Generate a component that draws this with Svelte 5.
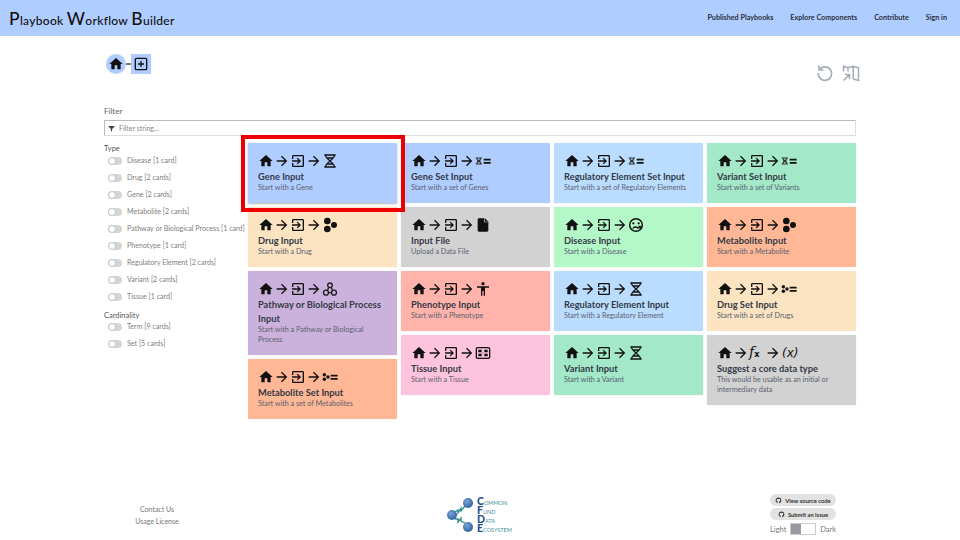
<script>
  const ICONS = {
    home: 'M10 20v-6h4v6h5v-8h3L12 3 2 12h3v8z',
    arrow: 'M4,11V13H16L10.5,18.5L11.92,19.92L19.84,12L11.92,4.08L10.5,5.5L16,11H4Z',
    enter: 'M19,3H5C3.89,3 3,3.89 3,5V9H5V5H19V19H5V15H3V19A2,2 0 0,0 5,21H19A2,2 0 0,0 21,19V5C21,3.89 20.1,3 19,3M10.08,15.58L11.5,17L16.5,12L11.5,7L10.08,8.41L12.67,11H3V13H12.67L10.08,15.58Z',
    file: 'M14 2H6a2 2 0 0 0-2 2v16a2 2 0 0 0 2 2h12a2 2 0 0 0 2-2V8z'
  }

  const columns = [
    [
      { title: 'Gene Input', desc: 'Start with a Gene', icon: 'dna', color: '#b0cdff', selected: true },
      { title: 'Drug Input', desc: 'Start with a Drug', icon: 'pills', color: '#fce4c2' },
      { title: 'Pathway or Biological Process Input', desc: 'Start with a Pathway or Biological Process', icon: 'pathway', color: '#cbb2dc' },
      { title: 'Metabolite Set Input', desc: 'Start with a set of Metabolites', icon: 'pillset', color: '#ffb795' }
    ],
    [
      { title: 'Gene Set Input', desc: 'Start with a set of Genes', icon: 'dnaset', color: '#b0cdff' },
      { title: 'Input File', desc: 'Upload a Data File', icon: 'file', color: '#d2d2d2' },
      { title: 'Phenotype Input', desc: 'Start with a Phenotype', icon: 'person', color: '#ffb3aa' },
      { title: 'Tissue Input', desc: 'Start with a Tissue', icon: 'tissue', color: '#ffc4dd' }
    ],
    [
      { title: 'Regulatory Element Set Input', desc: 'Start with a set of Regulatory Elements', icon: 'dnaset', color: '#badcff' },
      { title: 'Disease Input', desc: 'Start with a Disease', icon: 'face', color: '#b4f8c8' },
      { title: 'Regulatory Element Input', desc: 'Start with a Regulatory Element', icon: 'dna', color: '#badcff' },
      { title: 'Variant Input', desc: 'Start with a Variant', icon: 'dna', color: '#a2e8c9' }
    ],
    [
      { title: 'Variant Set Input', desc: 'Start with a set of Variants', icon: 'dnaset', color: '#a2e8c9' },
      { title: 'Metabolite Input', desc: 'Start with a Metabolite', icon: 'pills', color: '#ffb795' },
      { title: 'Drug Set Input', desc: 'Start with a set of Drugs', icon: 'pillset', color: '#fce4c2' },
      { title: 'Suggest a core data type', desc: 'This would be usable as an initial or intermediary data', icon: 'suggest', color: '#d2d2d2' }
    ]
  ]

  const types = ['Disease [1 card]', 'Drug [2 cards]', 'Gene [2 cards]', 'Metabolite [2 cards]', 'Pathway or Biological Process [1 card]', 'Phenotype [1 card]', 'Regulatory Element [2 cards]', 'Variant [2 cards]', 'Tissue [1 card]']
  const cardinality = ['Term [9 cards]', 'Set [5 cards]']
  const GITHUB = 'M12 2a10 10 0 0 0-3.2 19.5c.5.1.7-.2.7-.5v-1.8c-2.8.6-3.4-1.3-3.4-1.3-.5-1.2-1.1-1.5-1.1-1.5-.9-.6.1-.6.1-.6 1 .1 1.5 1 1.5 1 .9 1.5 2.3 1.1 2.9.8.1-.6.3-1.1.6-1.3-2.2-.3-4.6-1.1-4.6-5 0-1.1.4-2 1-2.7-.1-.3-.4-1.3.1-2.7 0 0 .8-.3 2.8 1a9.600 9.600 0 0 1 5 0c1.900-1.300 2.800-1 2.800-1 .5 1.400.2 2.400.1 2.700.6.700 1 1.600 1 2.700 0 3.900-2.300 4.700-4.600 5 .4.300.7.900.7 1.900V21c0 .3.2.6.7.5A10 10 0 0 0 12 2z'
</script>

{#snippet dna()}
  <svg class="icon" viewBox="0 0 24 24" fill="none" stroke="#111" stroke-width="1.900">
    <path d="M3.500 3h17M3.500 21h17M5 3c0 6.500 14 11.500 14 18M19 3c0 6.500-14 11.500-14 18M7 7.500h10M7 16.500h10" />
  </svg>
{/snippet}

{#snippet setLines()}
  <path d="M13 8.500h10.500v2.600H13zM13 13.500h10.500v2.600H13z" fill="#111" />
{/snippet}

{#snippet finalIcon(name)}
  {#if name === 'dna'}
    {@render dna()}
  {:else if name === 'dnaset'}
    <svg class="icon" viewBox="0 0 24 24">
      <path d="M1 7.500h9.500M1 16.500h9.500M2.500 7.500c0 3.500 6.500 5.500 6.500 9M9 7.500c0 3.500-6.500 5.500-6.500 9M3 12h5.500" fill="none" stroke="#333" stroke-width="1.600" />
      {@render setLines()}
    </svg>
  {:else if name === 'pills'}
    <svg class="icon" viewBox="0 0 24 24" fill="#111">
      <circle cx="8" cy="6" r="5" /><circle cx="8" cy="18" r="5" /><circle cx="18" cy="12" r="4.500" />
    </svg>
  {:else if name === 'pillset'}
    <svg class="icon" viewBox="0 0 24 24" fill="#111">
      <circle cx="3.500" cy="8.500" r="2.600" /><circle cx="3.500" cy="15.500" r="2.600" /><circle cx="9" cy="12" r="2.600" />
      {@render setLines()}
    </svg>
  {:else if name === 'file'}
    <svg class="icon" viewBox="0 0 24 24"><path d={ICONS.file} fill="#111" /><path d="M14 2v6h6z" fill="#d2d2d2" /><path d="M15 2l5 5h-5z" fill="#111" /></svg>
  {:else if name === 'person'}
    <svg class="icon" viewBox="0 0 24 24" fill="#111">
      <circle cx="12" cy="4" r="2.500" /><path d="M3 8h18v2h-6v12h-2v-7h-2v7H9V10H3z" />
    </svg>
  {:else if name === 'tissue'}
    <svg class="icon" viewBox="0 0 24 24">
      <rect x="2" y="4" width="20" height="16" rx="2" fill="none" stroke="#111" stroke-width="2" />
      <path d="M5 7h5v4H5zM14 7h5v4h-5zM5 13h5v4H5zM14 13h5v4h-5z" fill="#111" />
      <path d="M11 11.500h2v1h-2z" fill="#111" />
    </svg>
  {:else if name === 'face'}
    <svg class="icon" viewBox="0 0 24 24" fill="none" stroke="#111" stroke-width="2.200">
      <circle cx="12" cy="12" r="9.500" />
      <circle cx="8" cy="9.500" r="1.700" fill="#111" stroke="none" /><circle cx="16" cy="9.500" r="1.700" fill="#111" stroke="none" />
      <path d="M7.500 17.500c1-3.500 6-3.500 8 0" /><circle cx="17.500" cy="15" r="2.300" fill="#111" stroke="none" />
    </svg>
  {:else if name === 'pathway'}
    <svg class="icon" viewBox="0 0 24 24" fill="none" stroke="#222" stroke-width="2">
      <circle cx="12" cy="6.500" r="3.500" /><circle cx="6" cy="17.500" r="3.700" /><circle cx="18" cy="17.500" r="3.700" />
      <path d="M10 17.500h4M10.300 9.800l-2.400 4.200M13.700 9.800l2.400 4.200" />
    </svg>
  {/if}
{/snippet}

{#snippet glyph(name)}
  <svg class="icon" viewBox="0 0 24 24"><path d={ICONS[name]} fill="#111" /></svg>
{/snippet}

{#snippet toggle(label)}
  <div class="option">
    <span class="switch"><span class="knob"></span></span>
    <span>{label}</span>
  </div>
{/snippet}

<div class="page">
  <header>
    <div class="brand"><b>P</b>laybook <b>W</b>orkflow <b>B</b>uilder</div>
    <nav>
      <span>Published Playbooks</span>
      <span>Explore Components</span>
      <span>Contribute</span>
      <span>Sign in</span>
    </nav>
  </header>

  <main>
    <div class="toolbar">
      <div class="crumbs">
        <span class="crumb-home">{@render glyph('home')}</span>
        <span class="dash"></span>
        <span class="crumb-add">
          <svg class="icon" viewBox="0 0 24 24" fill="none" stroke="#111" stroke-width="2">
            <rect x="3.500" y="3.500" width="17" height="17" rx="1.500" /><path d="M12 7.500v9M7.500 12h9" />
          </svg>
        </span>
      </div>
      <div class="actions">
        <svg viewBox="0 0 24 24" fill="none" stroke="#a4acb8" stroke-width="2.200">
          <path d="M5.500 6.500A9 9 0 1 1 3 12" /><path d="M4 2v6h6" />
        </svg>
        <svg viewBox="0 0 24 24" fill="none" stroke="#a4acb8" stroke-width="2">
          <path d="M2 10V3l6 2 7-2 7 2v17l-7-2M8 5v5M15 3v17M2 22l8-8M4 14h6v6" />
        </svg>
      </div>
    </div>

    <div class="filter-label">Filter</div>
    <div class="filter-input">
      <svg viewBox="0 0 24 24"><path d="M2 3h20v3l-8 8v8h-4v-8L2 6z" fill="#444" /></svg>
      <span>Filter string...</span>
    </div>

    <div class="content">
      <aside>
        <div class="group-title">Type</div>
        {#each types as label}
          {@render toggle(label)}
        {/each}
        <div class="group-title second">Cardinality</div>
        {#each cardinality as label}
          {@render toggle(label)}
        {/each}
      </aside>

      <div class="cards">
        {#each columns as column}
          <div class="column">
            {#each column as card}
              <article class="card" class:selected={card.selected} style={`background:${card.color}`}>
                <div class="flow">
                  {@render glyph('home')}
                  {@render glyph('arrow')}
                  {#if card.icon === 'suggest'}
                    <span class="fx">f<span class="fx-sub">x</span></span>
                    {@render glyph('arrow')}
                    <span class="var">(x)</span>
                  {:else}
                    {@render glyph('enter')}
                    {@render glyph('arrow')}
                    {@render finalIcon(card.icon)}
                  {/if}
                </div>
                <h3>{card.title}</h3>
                <p>{card.desc}</p>
              </article>
            {/each}
          </div>
        {/each}
      </div>
    </div>
  </main>

  <footer>
    <div class="links">
      <span>Contact Us</span>
      <span>Usage License</span>
    </div>
    <div class="logo">
      <svg width="30" height="36" viewBox="0 0 30 36">
        <defs>
          <radialGradient id="ball" cx="0.4" cy="0.35" r="0.7">
            <stop offset="0" stop-color="#7ba4d6" />
            <stop offset="1" stop-color="#2f5f9e" />
          </radialGradient>
        </defs>
        <path d="M8 14l3-2 0 3 3-5 0 3 4-5M8 21l3 0 0 3 3-4 0 3 4 2" fill="none" stroke="#2e8f88" stroke-width="1.300" />
        <circle cx="21" cy="5" r="5" fill="url(#ball)" />
        <circle cx="5" cy="17" r="5" fill="url(#ball)" />
        <circle cx="21" cy="29" r="5" fill="url(#ball)" />
      </svg>
      <div class="logo-text">
        <div><b>C</b>ommon</div>
        <div><b>F</b>und</div>
        <div><b>D</b>ata</div>
        <div><b>E</b>cosystem</div>
      </div>
    </div>
    <div class="meta">
      <span class="pill"><svg viewBox="0 0 24 24"><path d={GITHUB} fill="#333" /></svg>View source code</span>
      <span class="pill"><svg viewBox="0 0 24 24"><path d={GITHUB} fill="#333" /></svg>Submit an issue</span>
      <div class="theme">
        <span>Light</span>
        <span class="theme-switch"><span></span></span>
        <span>Dark</span>
      </div>
    </div>
  </footer>
</div>

<style>
  :global(body) {
    margin: 0;
    background: #fff;
    font-family: Lato, "Noto Sans", sans-serif;
    color: #444;
  }

  .page {
    width: 960px;
    height: 540px;
    display: flex;
    flex-direction: column;
    overflow: hidden;
  }

  header {
    height: 36px;
    flex: none;
    background: #b0cdff;
    display: flex;
    align-items: center;
    justify-content: space-between;
    padding: 0 13px 0 9px;
  }

  .brand {
    font-size: 12px;
    font-weight: 500;
    color: #111;
    letter-spacing: 0.3px;
    padding-top: 1px;
  }

  .brand b {
    font-size: 17.500px;
    font-weight: 500;
  }

  nav {
    display: flex;
    gap: 17px;
    font-size: 7.200px;
    font-weight: 700;
    color: #2a3040;
    margin-top: -1px;
  }

  main {
    flex: 1;
    width: 752px;
    margin: 0 auto;
    display: flex;
    flex-direction: column;
  }

  .toolbar {
    display: flex;
    justify-content: space-between;
    height: 50px;
    padding: 18px 0 0 2px;
    box-sizing: border-box;
    margin-right: -4px;
  }

  .crumbs {
    display: flex;
    align-items: center;
    height: 20px;
  }

  .crumb-home {
    width: 20px;
    height: 20px;
    border-radius: 50%;
    background: #b0cdff;
    display: grid;
    place-items: center;
  }

  .dash {
    width: 5px;
    height: 2px;
    background: #777;
  }

  .crumb-add {
    width: 20px;
    height: 20px;
    background: #b0cdff;
    display: grid;
    place-items: center;
  }

  .actions {
    display: flex;
    gap: 8px;
    margin-top: 10px;
  }

  .actions svg {
    width: 18px;
    height: 18px;
  }

  .filter-label {
    font-size: 8px;
    line-height: 10px;
    margin-top: 20px;
    color: #666;
  }

  .filter-input {
    margin-top: 4px;
    height: 16px;
    box-sizing: border-box;
    border: 1px solid #bbb;
    border-bottom-color: #ddd;
    border-right-color: #ddd;
    border-radius: 1px;
    display: flex;
    align-items: center;
    gap: 4px;
    padding-left: 3px;
    font-size: 7px;
    color: #888;
  }

  .filter-input svg {
    width: 7px;
    height: 7px;
  }

  .content {
    display: flex;
    margin-top: 7px;
  }

  aside {
    width: 144px;
    flex: none;
    font-size: 7.100px;
    padding-top: 2px;
  }

  .group-title {
    font-size: 7.500px;
    line-height: 8px;
    color: #555;
    margin-bottom: -1px;
  }

  .group-title.second {
    margin-top: 7px;
    margin-bottom: -2px;
  }

  .option {
    display: flex;
    align-items: center;
    gap: 5px;
    height: 17px;
    padding-left: 4px;
    color: #808080;
    white-space: nowrap;
  }

  .switch {
    width: 14px;
    height: 8px;
    border-radius: 4px;
    background: #d5d5d5;
    flex: none;
    position: relative;
  }

  .knob {
    position: absolute;
    left: 0;
    top: 0;
    width: 8px;
    height: 8px;
    box-sizing: border-box;
    border-radius: 50%;
    background: #fff;
    border: 1px solid #c4c4c4;
  }

  .cards {
    display: flex;
    gap: 4px;
    align-items: flex-start;
  }

  .column {
    width: 149px;
    display: flex;
    flex-direction: column;
    gap: 4px;
  }

  .card {
    position: relative;
    padding: 10px 10px 10px;
    border-radius: 1px;
    box-shadow: 0 0 1px rgba(0, 0, 0, 0.2);
  }

  .card.selected {
    box-shadow: 0 1px 2px rgba(0, 0, 0, 0.3);
  }

  /* red marker sits over the neighbouring cards */
  .card.selected::after {
    content: '';
    position: absolute;
    inset: -8px -8px -9px -7px;
    border: 4px solid #ee0000;
    z-index: 1;
    pointer-events: none;
  }

  .flow {
    display: flex;
    align-items: center;
    height: 16px;
  }

  .icon {
    width: 16px;
    height: 16px;
    flex: none;
    display: block;
  }

  .fx {
    font-family: "DejaVu Serif", serif;
    font-size: 14px;
    line-height: 16px;
    color: #111;
    font-style: italic;
    width: 16px;
    white-space: nowrap;
  }

  .fx-sub {
    font-family: "DejaVu Sans", sans-serif;
    font-size: 8px;
    font-weight: 700;
    font-style: normal;
  }

  .var {
    font-family: "DejaVu Sans", sans-serif;
    font-size: 12px;
    line-height: 16px;
    font-style: italic;
    color: #111;
    margin-left: 1px;
    white-space: nowrap;
  }

  h3 {
    margin: 1px 0 0;
    font-size: 9.300px;
    line-height: 14px;
    font-weight: 700;
    color: #333a46;
  }

  p {
    margin: -1px 0 0;
    font-size: 7.200px;
    line-height: 10px;
    color: #5a6270;
  }

  footer {
    flex: none;
    height: 52px;
    position: relative;
    display: grid;
    grid-template-columns: 447px 1fr 190px;
    align-items: start;
  }

  .links {
    display: flex;
    flex-direction: column;
    align-items: center;
    gap: 4px;
    width: 314px;
    padding-top: 17px;
    font-size: 7px;
    line-height: 8px;
    color: #777;
  }

  .logo {
    display: flex;
    align-items: flex-start;
    padding-top: 10px;
  }

  .logo-text {
    font-size: 5.500px;
    color: #3f8f96;
    text-transform: uppercase;
    margin-top: -1px;
  }

  .logo-text b {
    font-size: 10.500px;
    color: #1f4f8f;
    font-weight: 900;
  }

  .logo-text div {
    height: 9px;
    line-height: 9px;
  }

  .meta {
    display: flex;
    flex-direction: column;
    align-items: flex-start;
    gap: 2px;
    padding-top: 6px;
  }

  .pill {
    display: flex;
    align-items: center;
    justify-content: center;
    gap: 3px;
    width: 66px;
    height: 12px;
    border-radius: 6px;
    background: #e2e2e2;
    font-size: 5.800px;
    font-weight: 700;
    color: #333;
    white-space: nowrap;
  }

  .pill svg {
    width: 7px;
    height: 7px;
  }

  .theme {
    display: flex;
    align-items: center;
    gap: 4px;
    width: 66px;
    justify-content: center;
    font-size: 7.500px;
    color: #777;
    margin-top: 1px;
  }

  .theme-switch {
    width: 24px;
    height: 10px;
    border: 1px solid #ccc;
    background: #fff;
  }

  .theme-switch span {
    display: block;
    width: 10px;
    height: 10px;
    background: #9a9aa2;
  }
</style>
